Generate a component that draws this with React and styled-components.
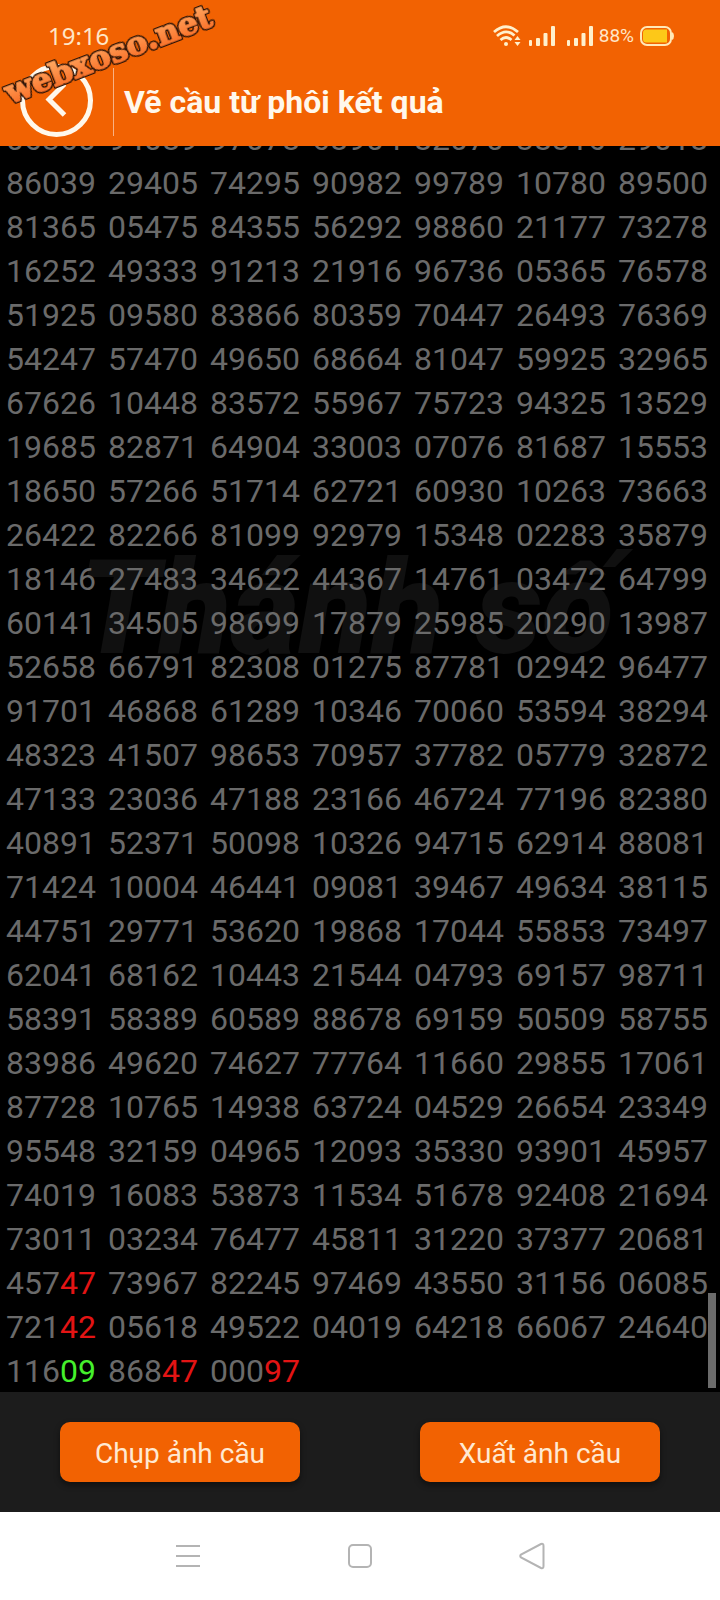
import React from 'react'
import styled, { createGlobalStyle } from 'styled-components'

const rows = [
  '06360 94089 97078 68904 82070 38316 29018',
  '86039 29405 74295 90982 99789 10780 89500',
  '81365 05475 84355 56292 98860 21177 73278',
  '16252 49333 91213 21916 96736 05365 76578',
  '51925 09580 83866 80359 70447 26493 76369',
  '54247 57470 49650 68664 81047 59925 32965',
  '67626 10448 83572 55967 75723 94325 13529',
  '19685 82871 64904 33003 07076 81687 15553',
  '18650 57266 51714 62721 60930 10263 73663',
  '26422 82266 81099 92979 15348 02283 35879',
  '18146 27483 34622 44367 14761 03472 64799',
  '60141 34505 98699 17879 25985 20290 13987',
  '52658 66791 82308 01275 87781 02942 96477',
  '91701 46868 61289 10346 70060 53594 38294',
  '48323 41507 98653 70957 37782 05779 32872',
  '47133 23036 47188 23166 46724 77196 82380',
  '40891 52371 50098 10326 94715 62914 88081',
  '71424 10004 46441 09081 39467 49634 38115',
  '44751 29771 53620 19868 17044 55853 73497',
  '62041 68162 10443 21544 04793 69157 98711',
  '58391 58389 60589 88678 69159 50509 58755',
  '83986 49620 74627 77764 11660 29855 17061',
  '87728 10765 14938 63724 04529 26654 23349',
  '95548 32159 04965 12093 35330 93901 45957',
  '74019 16083 53873 11534 51678 92408 21694',
  '73011 03234 76477 45811 31220 37377 20681',
  '457r47 73967 82245 97469 43550 31156 06085',
  '721r42 05618 49522 04019 64218 66067 24640',
  '116g09 868r47 000r97',
]

const marks = { r: '#e31414', g: '#45f02c' }

const GlobalStyle = createGlobalStyle`
  * {
    box-sizing: border-box;
  }

  body {
    margin: 0;
    font-family: Roboto, 'Noto Sans', sans-serif;
    background: #000000;
  }
`

const Page = styled.div`
  display: flex;
  flex-direction: column;
  height: 100vh;
`

const Header = styled.header`
  position: relative;
  flex: none;
  color: #fff8ec;
  background-color: #f26202;
`

const StatusBar = styled.div`
  display: flex;
  align-items: center;
  justify-content: space-between;
  height: 72px;
  padding: 0 46px 0 48px;
`

const Clock = styled.span`
  font-family: 'Noto Sans', sans-serif;
  font-size: 24px;
  line-height: 32px;
  color: #ffe6c8;
`

const StatusIcons = styled.div`
  display: flex;
  align-items: center;
  gap: 6px;
`

const Signals = styled.div`
  display: flex;
  gap: 10px;
`

const BatteryLevel = styled.span`
  font-size: 19px;
  line-height: 24px;
  color: #ffe6c8;
`

const TitleBar = styled.div`
  display: flex;
  align-items: center;
  height: 74px;
  padding: 0 20px 14px;
`

const BackButton = styled.button`
  display: flex;
  padding: 0 0 4px;
  border: 0;
  color: inherit;
  background: none;
`

const Title = styled.h1`
  display: flex;
  align-items: center;
  height: 68px;
  margin: 0 0 0 20px;
  padding-left: 10px;
  border-left: 1px solid #f9b183;
  font-size: 32px;
  font-weight: 700;
  line-height: 40px;
`

const SiteMark = styled.svg`
  position: absolute;
  top: 0;
  left: 0;
  pointer-events: none;

  text {
    font-family: 'DejaVu Serif', serif;
    font-size: 32px;
    font-weight: 700;
    filter: drop-shadow(1px 0 0 #2a1206) drop-shadow(-1px 0 0 #2a1206) drop-shadow(0 1px 0 #2a1206)
      drop-shadow(0 -1px 0 #2a1206);
  }
`

const Board = styled.main`
  position: relative;
  display: flex;
  flex: 1;
  flex-direction: column;
  justify-content: flex-end;
  min-height: 0;
  overflow: hidden;
  background-color: #000000;
`

const Watermark = styled.div`
  position: absolute;
  top: 386px;
  left: 0;
  width: 100%;
  padding-right: 28px;
  font-size: 132px;
  font-style: italic;
  font-weight: 900;
  line-height: 152px;
  text-align: center;
  color: #101010;
`

const NumberRow = styled.div`
  position: relative;
  display: grid;
  flex: none;
  grid-template-columns: repeat(7, 1fr);
  padding: 3px 0 1px 6px;
  font-size: 32px;
  line-height: 40px;
  color: #6a6a6a;
`

const Mark = styled.span`
  color: ${props => props.$color};
`

const ScrollThumb = styled.div`
  position: absolute;
  right: 4px;
  bottom: 4px;
  width: 8px;
  height: 95px;
  background-color: #6b6b6b;
`

const Actions = styled.footer`
  display: flex;
  flex: none;
  justify-content: space-around;
  padding: 30px 0;
  background-color: #1c1c1c;
`

const ActionButton = styled.button`
  width: 240px;
  height: 60px;
  padding: 4px 0 0;
  border: 0;
  border-radius: 10px;
  font-family: inherit;
  font-size: 28px;
  line-height: 32px;
  color: #ffe9d2;
  background-color: #f26202;
  box-shadow: 0 3px 6px rgba(0, 0, 0, 0.45);
`

const NavBar = styled.nav`
  display: flex;
  flex: none;
  align-items: center;
  justify-content: center;
  gap: 146px;
  height: 88px;
  background-color: #ffffff;
`

const NavButton = styled.button`
  display: flex;
  padding: 0;
  border: 0;
  color: #b4b4b4;
  background: none;
`

const WifiIcon = () => (
  <svg width="28" height="22" viewBox="0 0 28 22" fill="none" stroke="#fff0cc" strokeWidth="2.8">
    <path d="M1 7 Q13 -3.5 25 7" />
    <path d="M4 11 Q13 3 21.5 10.5" />
    <path d="M7.5 15 Q13 10 18.5 15" />
    <circle cx="13" cy="19" r="2" fill="#fff0cc" stroke="none" />
    <path d="M21.5 15 L24.5 11 L27.5 15 Z M21.5 17 L24.5 21 L27.5 17 Z" fill="#fff0cc" stroke="none" />
  </svg>
)

const SignalIcon = () => (
  <svg width="28" height="22" viewBox="0 0 28 22" fill="#fff0cc">
    <rect x="2" y="15" width="3" height="6" rx="1" />
    <rect x="9" y="13" width="4" height="8" rx="1" />
    <rect x="16.5" y="8" width="4" height="13" rx="1" />
    <rect x="24" y="1" width="4" height="20" rx="1" />
  </svg>
)

const BatteryIcon = () => (
  <svg width="34" height="20" viewBox="0 0 34 20" fill="none">
    <rect x="1" y="1" width="30" height="18" rx="6" stroke="#ffe9b8" strokeWidth="2" />
    <path d="M32 6 Q34 7 34 10 Q34 13 32 14 Z" fill="#ffe9b8" />
    <path d="M6 3.5 H27 V16.5 H6 Q3 16.5 3 13 V7 Q3 3.5 6 3.5 Z" fill="#fdc818" />
  </svg>
)

const BackIcon = () => (
  <svg width="73" height="73" viewBox="0 0 73 73" fill="none" stroke="currentColor" strokeWidth="5">
    <circle cx="36.5" cy="36.5" r="34" />
    <path d="M44.5 20 L29 35.5 L44.5 51" />
  </svg>
)

const App = () => (
  <Page>
    <GlobalStyle />
    <Header>
      <StatusBar>
        <Clock>19:16</Clock>
        <StatusIcons>
          <WifiIcon />
          <Signals>
            <SignalIcon />
            <SignalIcon />
          </Signals>
          <BatteryLevel>88%</BatteryLevel>
          <BatteryIcon />
        </StatusIcons>
      </StatusBar>
      <TitleBar>
        <BackButton type="button" aria-label="Back">
          <BackIcon />
        </BackButton>
        <Title>Vẽ cầu từ phôi kết quả</Title>
      </TitleBar>
      <SiteMark width="240" height="120" viewBox="0 0 240 120">
        <defs>
          <linearGradient id="markFill" x1="0" y1="0" x2="0" y2="1">
            <stop offset="0.2" stopColor="#ffa35c" />
            <stop offset="1" stopColor="#f8641c" />
          </linearGradient>
        </defs>
        <text
          x="10"
          y="104"
          transform="rotate(-21 10 104)"
          fill="url(#markFill)"
          stroke="url(#markFill)"
          strokeWidth="1.6"
          strokeLinejoin="round"
        >
          webxoso.net
        </text>
      </SiteMark>
    </Header>
    <Board>
      <Watermark>Thánh số</Watermark>
      {rows.map(row => (
        <NumberRow key={row}>
          {row.split(' ').map(number => {
            // "457r47" is 457 followed by a red 47
            const [plain, mark, tail] = number.split(/([rg])/)
            return (
              <span key={number}>
                {plain}
                {mark && <Mark $color={marks[mark]}>{tail}</Mark>}
              </span>
            )
          })}
        </NumberRow>
      ))}
      <ScrollThumb />
    </Board>
    <Actions>
      <ActionButton type="button">Chụp ảnh cầu</ActionButton>
      <ActionButton type="button">Xuất ảnh cầu</ActionButton>
    </Actions>
    <NavBar>
      <NavButton type="button" aria-label="Recent apps">
        <svg width="26" height="26" viewBox="0 0 26 26" stroke="currentColor" strokeWidth="2">
          <path d="M1 3 H25 M1 13 H25 M1 23 H25" />
        </svg>
      </NavButton>
      <NavButton type="button" aria-label="Home">
        <svg width="26" height="26" viewBox="0 0 26 26" fill="none" stroke="currentColor" strokeWidth="2">
          <rect x="2" y="2" width="22" height="22" rx="4" />
        </svg>
      </NavButton>
      <NavButton type="button" aria-label="Back">
        <svg width="26" height="28" viewBox="0 0 26 28" fill="none" stroke="currentColor" strokeWidth="2">
          <path d="M2 12.5 Q0.5 14 2 15.5 L22 26 Q24.5 27 24.5 24 V4 Q24.5 1 22 2 Z" />
        </svg>
      </NavButton>
    </NavBar>
  </Page>
)

export default App
